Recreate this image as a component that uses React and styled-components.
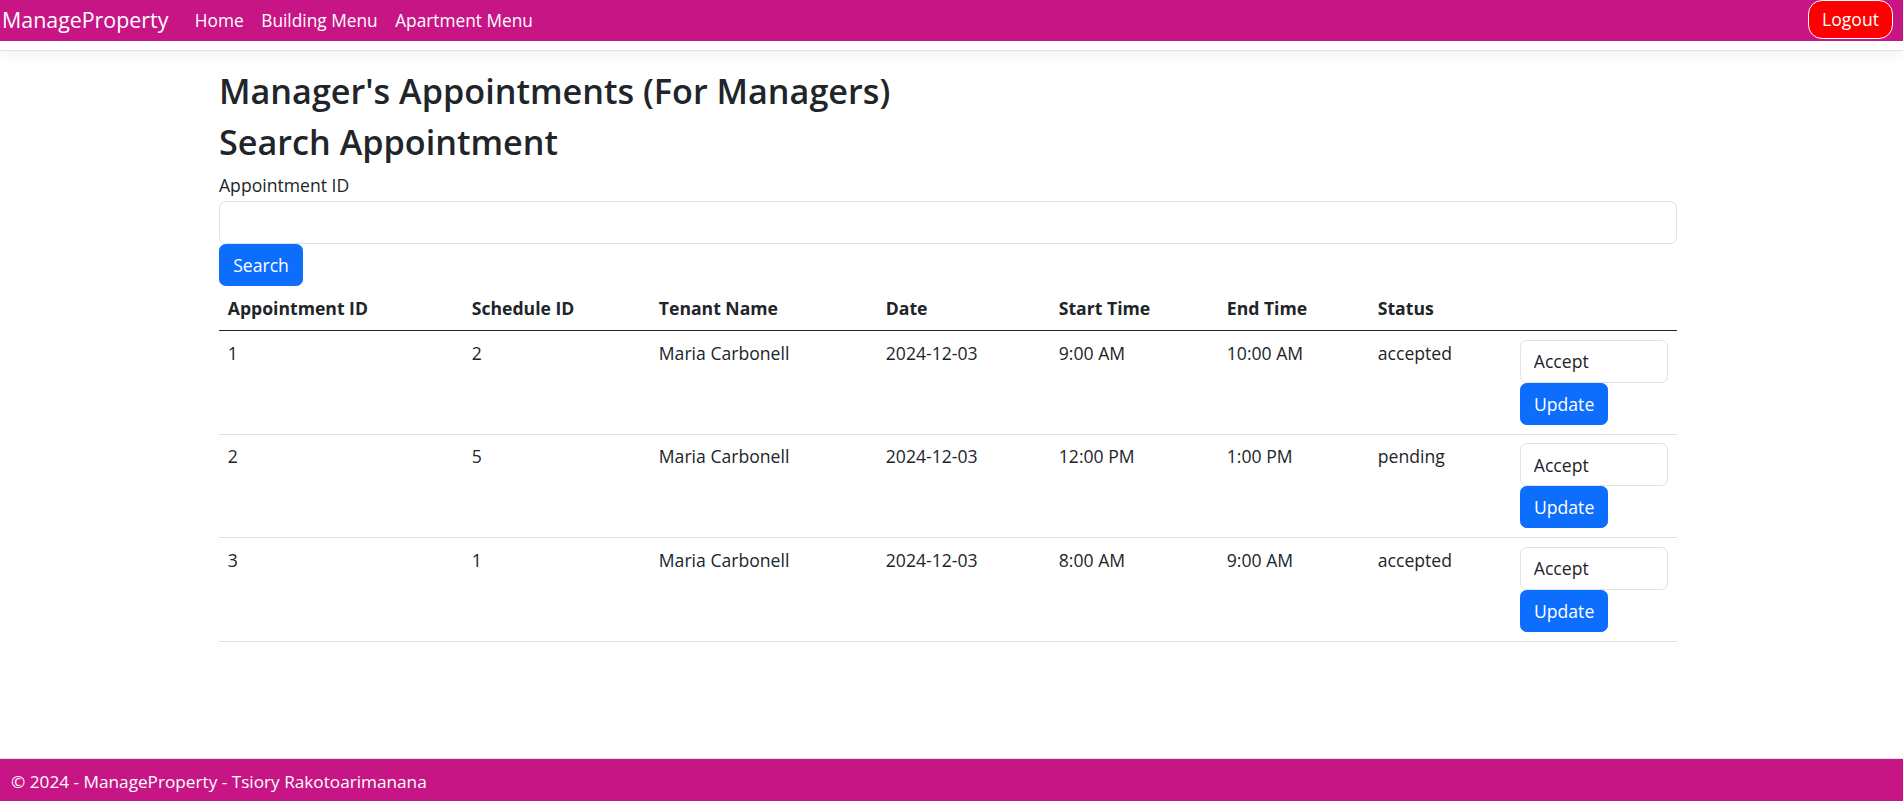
import React from 'react';
import styled, { createGlobalStyle } from 'styled-components';

const GlobalStyle = createGlobalStyle`
  * { box-sizing: border-box; }
  html, body { margin: 0; padding: 0; }
  body {
    font-family: "Open Sans", "Liberation Sans", sans-serif;
    font-size: 17.6px;
    line-height: 1.5;
    color: #212529;
    background: #fff;
  }
`;

const Page = styled.div`
  min-height: 100vh;
  display: flex;
  flex-direction: column;
`;

const Header = styled.header`
  border-bottom: 1px solid #dee2e6;
  box-shadow: 0 4px 13px rgba(0, 0, 0, 0.05);
  padding-bottom: 9px;
  margin-bottom: 18.6px;
`;

const Nav = styled.nav`
  height: 41px;
  background: #c71585;
  display: flex;
  align-items: center;
  padding: 0 10px 0 2px;
`;

const Brand = styled.a`
  font-size: 21.4px;
  color: #fff;
  margin-right: 17.6px;
  text-decoration: none;
  cursor: pointer;
`;

const NavLink = styled.a`
  font-size: 17.3px;
  color: #fff;
  padding: 0 8.8px;
  text-decoration: none;
  cursor: pointer;
`;

const Logout = styled.button`
  margin-left: auto;
  align-self: flex-start;
  height: 39px;
  padding: 0 13px;
  background: #ff0000;
  color: #fff;
  border: 1px solid #fff;
  border-radius: 14px;
  font: inherit;
  cursor: pointer;
`;

const Main = styled.main`
  padding: 0 226px 0 219px;
`;

const Title = styled.h1`
  font-size: 34.2px;
  font-weight: 600;
  line-height: 1.235;
  margin: 0 0 8.8px;
`;

const Label = styled.label`
  display: block;
  margin-bottom: 3px;
`;

const TextInput = styled.input`
  display: block;
  width: 100%;
  height: 43px;
  padding: 0 13px;
  border: 1px solid #dee2e6;
  border-radius: 6.6px;
  font: inherit;
  color: #212529;
`;

const Button = styled.button`
  display: block;
  height: 42px;
  padding: 0 13.2px;
  background: #0d6efd;
  color: #fff;
  border: 1px solid #0d6efd;
  border-radius: 6.6px;
  font: inherit;
  cursor: pointer;
`;

const Table = styled.table`
  width: 100%;
  border-collapse: collapse;
  table-layout: fixed;
`;

const Col = styled.col`
  width: ${p => p.$w}px;
`;

const Th = styled.th`
  text-align: left;
  font-weight: 700;
  padding: 8.8px;
  border-bottom: 1px solid #212529;
`;

const Td = styled.td`
  padding: 8.8px;
  vertical-align: top;
  border-bottom: 1px solid #dee2e6;
`;

const Select = styled.select`
  display: block;
  width: 148px;
  height: 43px;
  padding: 0 13px;
  appearance: none;
  background: #fff;
  border: 1px solid #dee2e6;
  border-radius: 6.6px;
  font: inherit;
  color: #212529;
`;

const Footer = styled.footer`
  margin-top: auto;
  border-top: 1px solid #dee2e6;
  background: #c71585;
  color: #fff;
  font-size: 17.2px;
  height: 43px;
  padding: 3px 0 0 11px;
  display: flex;
  align-items: center;
`;

const cols = [244, 187, 227, 173, 168, 151, 142, 166];
const headers = ['Appointment ID', 'Schedule ID', 'Tenant Name', 'Date', 'Start Time', 'End Time', 'Status', ''];

const appointments = [
  { id: 1, schedule: 2, tenant: 'Maria Carbonell', date: '2024-12-03', start: '9:00 AM', end: '10:00 AM', status: 'accepted' },
  { id: 2, schedule: 5, tenant: 'Maria Carbonell', date: '2024-12-03', start: '12:00 PM', end: '1:00 PM', status: 'pending' },
  { id: 3, schedule: 1, tenant: 'Maria Carbonell', date: '2024-12-03', start: '8:00 AM', end: '9:00 AM', status: 'accepted' },
];

const App = () => {
  return (
    <Page>
      <GlobalStyle />
      <Header>
        <Nav>
          <Brand>ManageProperty</Brand>
          <NavLink>Home</NavLink>
          <NavLink>Building Menu</NavLink>
          <NavLink>Apartment Menu</NavLink>
          <Logout>Logout</Logout>
        </Nav>
      </Header>

      <Main>
        <Title>Manager's Appointments (For Managers)</Title>
        <Title>Search Appointment</Title>
        <Label htmlFor="appointmentId">Appointment ID</Label>
        <TextInput id="appointmentId" type="text" />
        <Button>Search</Button>

        <Table>
          <colgroup>
            {cols.map((w, i) => <Col key={i} $w={w} />)}
          </colgroup>
          <thead>
            <tr>
              {headers.map((h, i) => <Th key={i}>{h}</Th>)}
            </tr>
          </thead>
          <tbody>
            {
              appointments.map(a => (
                <tr key={a.id}>
                  <Td>{a.id}</Td>
                  <Td>{a.schedule}</Td>
                  <Td>{a.tenant}</Td>
                  <Td>{a.date}</Td>
                  <Td>{a.start}</Td>
                  <Td>{a.end}</Td>
                  <Td>{a.status}</Td>
                  <Td>
                    <Select defaultValue="accepted">
                      <option value="accepted">Accept</option>
                      <option value="rejected">Reject</option>
                    </Select>
                    <Button>Update</Button>
                  </Td>
                </tr>
              ))
            }
          </tbody>
        </Table>
      </Main>

      <Footer>© 2024 - ManageProperty - Tsiory Rakotoarimanana</Footer>
    </Page>
  );
};

export default App;
